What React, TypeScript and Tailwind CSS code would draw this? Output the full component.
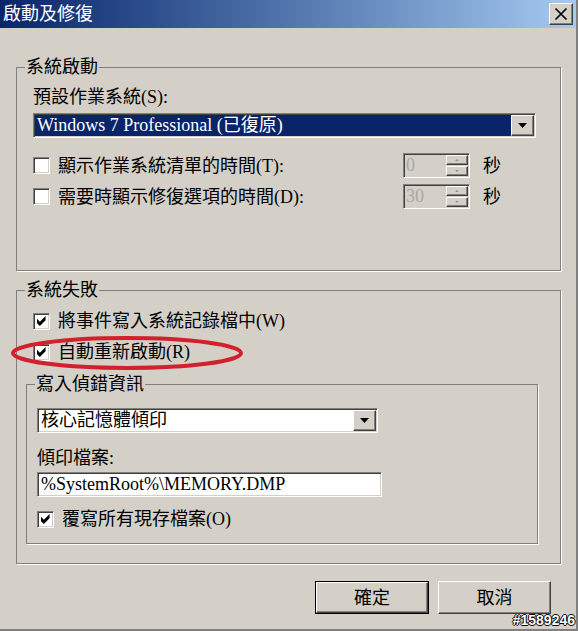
import { ReactNode } from "react";

// classic win2k bevels
const sunken =
      "border border-t-[#808080] border-l-[#808080] border-r-white border-b-white shadow-[inset_1px_1px_0_#404040,inset_-1px_-1px_0_#d4d0c8]";
const raised =
      "border border-t-white border-l-white border-r-[#404040] border-b-[#404040] shadow-[inset_-1px_-1px_0_#808080]";

function CheckBox({ checked }: { checked?: boolean }) {
      return (
            <span className={`w-[17px] h-[17px] shrink-0 bg-white flex items-center justify-center ${sunken}`}>
                  {checked && (
                        <svg width="10" height="10" viewBox="0 0 7 7">
                              <path d="M0 2 L2 4 L6 0 L6 3 L2 7 L0 5 Z" fill="#000" />
                        </svg>
                  )}
            </span>
      );
}

function Arrow({ up, color = "#000", w = 9, h = 5 }: { up?: boolean; color?: string; w?: number; h?: number }) {
      return (
            <svg width={w} height={h} viewBox="0 0 9 5">
                  <path d={up ? "M0 5 L4.5 0 L9 5 Z" : "M0 0 L9 0 L4.5 5 Z"} fill={color} />
            </svg>
      );
}

function Spinner({ value }: { value: string }) {
      return (
            <div className={`w-[67px] h-[25px] bg-[#d4d0c8] flex p-[1px] ${sunken}`}>
                  <span className="flex-1 pl-[1px] leading-[21px] text-[#a8a8a8]">{value}</span>
                  <div className="w-[22px] flex flex-col gap-[1px]">
                        <div className={`h-[10px] flex items-center justify-center bg-[#d4d0c8] ${raised}`}>
                              <Arrow up color="#909090" w={4} h={2} />
                        </div>
                        <div className={`h-[10px] flex items-center justify-center bg-[#d4d0c8] ${raised}`}>
                              <Arrow color="#909090" w={4} h={2} />
                        </div>
                  </div>
            </div>
      );
}

function Combo({ text, width, selected }: { text: string; width: string; selected?: boolean }) {
      return (
            <div className={`${width} h-[25px] bg-white flex p-[1px] ${sunken}`}>
                  <div
                        className={`flex-1 leading-[21px] pl-[2px] whitespace-nowrap ${selected ? "bg-[#0a246a] text-white" : "text-black"}`}
                  >
                        {text}
                  </div>
                  <div className={`w-[23px] bg-[#d4d0c8] flex items-center justify-center ${raised}`}>
                        <Arrow />
                  </div>
            </div>
      );
}

function Group({ label, className, children }: { label: string; className: string; children: ReactNode }) {
      return (
            <fieldset className={`border border-[#808080] shadow-[1px_1px_0_#fff] pl-[8px] ${className}`}>
                  <legend className="px-[1px] leading-[20px]">{label}</legend>
                  {children}
            </fieldset>
      );
}

function CheckRow({ checked, label }: { checked?: boolean; label: string }) {
      return (
            <div className="flex items-center gap-[8px] h-[20px] whitespace-nowrap">
                  <CheckBox checked={checked} />
                  <span>{label}</span>
            </div>
      );
}

function Button({ label, isDefault }: { label: string; isDefault?: boolean }) {
      if (isDefault) {
            return (
                  <div className="w-[114px] h-[33px] border border-black">
                        <div className={`w-full h-full bg-[#d4d0c8] flex items-center justify-center ${raised}`}>{label}</div>
                  </div>
            );
      }
      return (
            <div className={`w-[113px] h-[33px] bg-[#d4d0c8] flex items-center justify-center ${raised}`}>{label}</div>
      );
}

export default function App() {
      return (
            <div className="relative w-[578px] h-[631px] overflow-hidden bg-[#d4d0c8] border-r-2 border-b-2 border-[#808080] text-[18px] leading-[20px] text-black font-['Liberation_Serif','Noto_Sans_CJK_TC',serif]">
                  {/* Title bar */}
                  <div className="h-[28px] bg-linear-to-r from-[#0a246a] to-[#a6caf0] flex items-center justify-between pl-[3px] pr-[3px]">
                        <span className="text-white text-[18px]">啟動及修復</span>
                        <div className={`w-[24px] h-[22px] bg-[#d4d0c8] flex items-center justify-center ${raised}`}>
                              <svg width="14" height="14" viewBox="0 0 14 14">
                                    <path d="M1.5 1.5 L12.5 12.5 M12.5 1.5 L1.5 12.5" stroke="#000" strokeWidth="1.7" />
                              </svg>
                        </div>
                  </div>

                  {/* 系統啟動 */}
                  <Group label="系統啟動" className="ml-[16px] mt-[29px] w-[545px] pt-[10px] pb-[61px]">
                        <div className="ml-[8px] flex flex-col">
                              <div className="h-[20px]">預設作業系統(S):</div>
                              <div className="mt-[6px]">
                                    <Combo text="Windows 7 Professional (已復原)" width="w-[503px]" selected />
                              </div>
                              <div className="mt-[15px] flex items-center h-[25px]">
                                    <div className="w-[370px] flex items-center gap-[8px] whitespace-nowrap">
                                          <CheckBox />
                                          <span>顯示作業系統清單的時間(T):</span>
                                    </div>
                                    <Spinner value="0" />
                                    <span className="ml-[13px]">秒</span>
                              </div>
                              <div className="mt-[6px] flex items-center h-[25px]">
                                    <div className="w-[370px] flex items-center gap-[8px] whitespace-nowrap">
                                          <CheckBox />
                                          <span>需要時顯示修復選項的時間(D):</span>
                                    </div>
                                    <Spinner value="30" />
                                    <span className="ml-[13px]">秒</span>
                              </div>
                        </div>
                  </Group>

                  {/* 系統失敗 */}
                  <Group label="系統失敗" className="ml-[16px] mt-[9px] w-[545px] pt-[11px] pb-[19px]">
                        <div className="ml-[8px]">
                              <CheckRow checked label="將事件寫入系統記錄檔中(W)" />
                              <div className="mt-[11px]">
                                    <CheckRow checked label="自動重新啟動(R)" />
                              </div>
                        </div>
                        <Group label="寫入偵錯資訊" className="ml-[1px] mt-[12px] w-[512px] pt-[14px] pb-[14px]">
                              <div className="ml-[2px] flex flex-col">
                                    <Combo text="核心記憶體傾印" width="w-[341px]" />
                                    <div className="mt-[15px] h-[20px]">傾印檔案:</div>
                                    <div className={`mt-[4px] w-[345px] h-[25px] bg-white p-[1px] pl-[3px] leading-[21px] ${sunken}`}>
                                          %SystemRoot%\MEMORY.DMP
                                    </div>
                                    <div className="mt-[12px]">
                                          <CheckRow checked label="覆寫所有現存檔案(O)" />
                                    </div>
                              </div>
                        </Group>
                  </Group>

                  {/* Buttons */}
                  <div className="mt-[17px] flex justify-end gap-[9px] pr-[25px]">
                        <Button label="確定" isDefault />
                        <Button label="取消" />
                  </div>

                  {/* red annotation ellipse */}
                  <svg className="absolute left-[9px] top-[334px] pointer-events-none" width="236" height="38" viewBox="0 0 236 38">
                        <ellipse cx="118" cy="19" rx="114" ry="15" fill="none" stroke="#d3202c" strokeWidth="4" />
                  </svg>

                  {/* watermark */}
                  <span className="absolute right-[1px] bottom-[1px] text-[14px] leading-[15px] font-bold text-white font-['Liberation_Sans',sans-serif] [text-shadow:1px_0_0_#000,-1px_0_0_#000,0_1px_0_#000,0_-1px_0_#000]">
                        #1589246
                  </span>
            </div>
      );
}
